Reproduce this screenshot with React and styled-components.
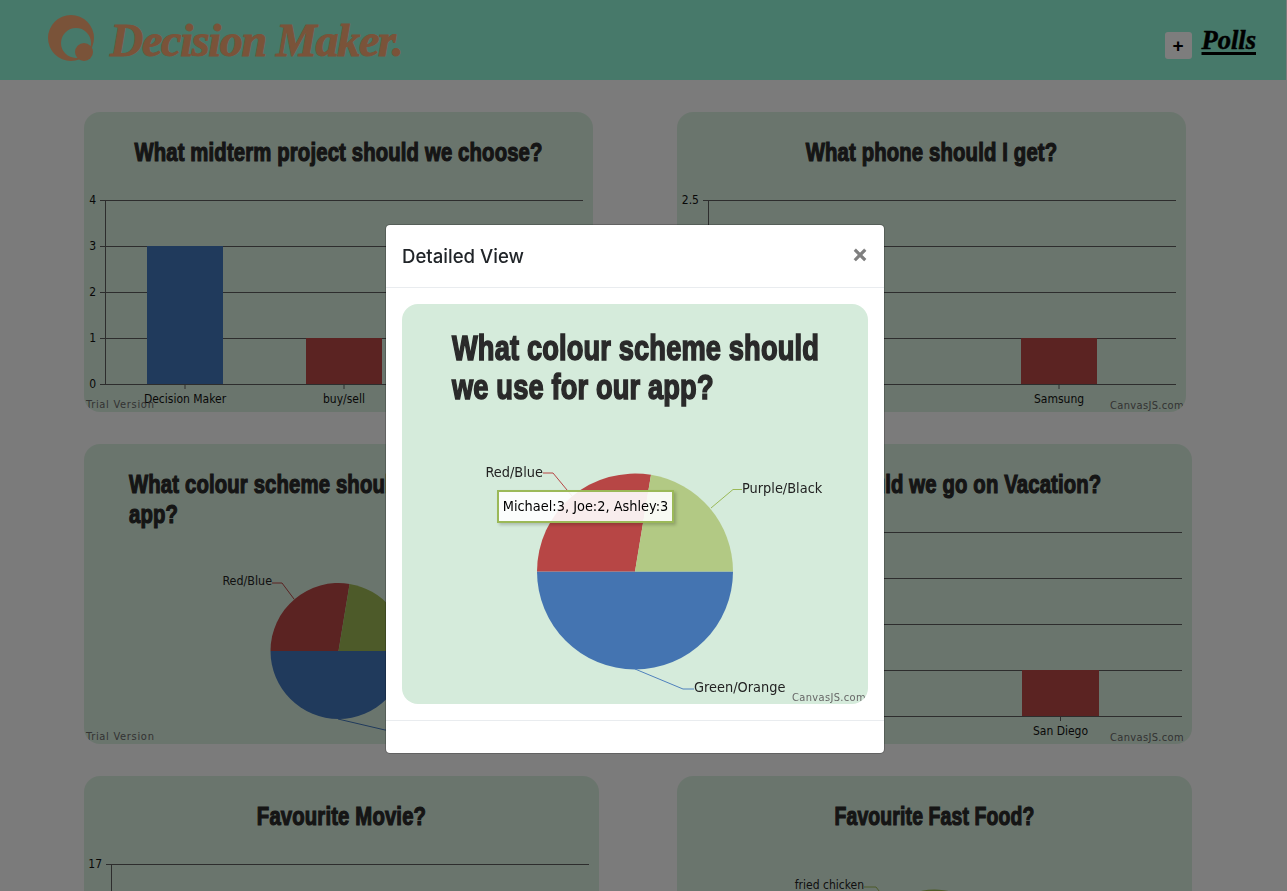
import styled, { createGlobalStyle } from "styled-components";

const GlobalStyle = createGlobalStyle`
  html, body {
    margin: 0;
    height: 100%;
    overflow: hidden;
    background: #f6f6f6;
  }
`;

const CHART_FONT = `"DejaVu Sans Condensed", "DejaVu Sans", sans-serif`;

// HEADER
const Header = styled.header`
  height: 80px;
  margin-right: 1px;
  padding: 15px 30px 0 48px;
  box-sizing: border-box;
  display: flex;
  align-items: flex-start;
  justify-content: space-between;
  background: #8ef2d4;
`;
const Brand = styled.div`
  display: flex;
  gap: 16px;
  color: #f4a672;
`;
const BrandName = styled.span`
  font-family: "Liberation Serif", serif;
  font-style: italic;
  font-weight: 700;
  font-size: 46px;
  line-height: 52px;
  letter-spacing: -1.3px;
  -webkit-text-stroke: 1px #f4a672;
`;
const Nav = styled.nav`
  display: flex;
  align-items: flex-start;
  gap: 10px;
`;
const AddButton = styled.button`
  width: 27px;
  height: 27px;
  margin-top: 17px;
  padding: 0;
  border: none;
  border-radius: 3px;
  background: #fbfbfb;
  color: #000;
  font-family: "Liberation Sans", sans-serif;
  font-weight: 700;
  font-size: 19px;
  line-height: 27px;
`;
const PollsLink = styled.a`
  font-family: "Liberation Serif", serif;
  font-style: italic;
  font-weight: 700;
  font-size: 26.5px;
  line-height: 50px;
  color: #000;
  text-decoration: underline;
  text-decoration-thickness: 3px;
  text-underline-offset: 3px;
  -webkit-text-stroke: 0.5px #000;
`;

// DASHBOARD
const Board = styled.main`
  display: grid;
  grid-template-columns: 593px 1fr;
  row-gap: 32px;
  padding: 32px 0 0 84px;
`;
const Card = styled.section`
  position: relative;
  width: ${(p) => p.$width}px;
  height: ${(p) => p.$height || 300}px;
  border-radius: 16px;
  background: #d5ebdb;
  overflow: hidden;
`;
// no Impact here, so squeeze a bold sans and thicken it with a stroke
const Title = styled.h2`
  --squeeze: ${(p) => p.$squeeze || 0.78};
  width: calc(100% / var(--squeeze));
  height: ${(p) => p.$height || 80}px;
  margin: 0;
  padding: ${(p) => p.$top || 25}px 0 0 calc(${(p) => p.$side || 0}px / var(--squeeze));
  box-sizing: border-box;
  transform: scaleX(var(--squeeze));
  transform-origin: left top;
  font-family: "Liberation Sans", sans-serif;
  font-weight: 700;
  font-size: ${(p) => p.$size || 26}px;
  line-height: ${(p) => p.$lead || 30}px;
  letter-spacing: 0.2px;
  white-space: nowrap;
  text-align: ${(p) => (p.$side ? "left" : "center")};
  color: #2a2a2a;
  -webkit-text-stroke: ${(p) => p.$stroke || 1.2}px #2a2a2a;
`;
const Plot = styled.svg`
  display: block;
  overflow: visible;
  font-family: ${CHART_FONT};
`;
const Watermark = styled.span`
  position: absolute;
  bottom: ${(p) => (p.$right === undefined ? 1 : 0)}px;
  ${(p) => (p.$right === undefined ? "left: 2px;" : `right: ${p.$right}px;`)}
  font-family: ${CHART_FONT};
  font-size: 11px;
  line-height: 12px;
  letter-spacing: ${(p) => (p.$right === undefined ? 0.7 : 0.35)}px;
  color: #666;
`;

// MODAL
const Overlay = styled.div`
  position: fixed;
  inset: 0;
  padding-right: 17px;
  display: flex;
  justify-content: center;
  align-items: flex-start;
  background: rgba(0, 0, 0, 0.5);
`;
const Modal = styled.div`
  width: 500px;
  margin-top: 224px;
  box-sizing: border-box;
  border: 1px solid rgba(0, 0, 0, 0.2);
  border-radius: 5px;
  background: #fff;
  background-clip: padding-box;
`;
const ModalHeader = styled.div`
  height: 63px;
  padding: 0 17px 0 16px;
  box-sizing: border-box;
  display: flex;
  align-items: center;
  justify-content: space-between;
  border-bottom: 1px solid #e9ecef;
`;
const ModalTitle = styled.h5`
  margin: 0;
  font-family: Inter, "Liberation Sans", sans-serif;
  font-weight: 500;
  font-size: 18.6px;
  color: #212529;
`;
const CloseButton = styled.button`
  padding: 0 0 2px;
  border: none;
  background: none;
  font-family: "Liberation Sans", sans-serif;
  font-weight: 700;
  font-size: 24px;
  line-height: 24px;
  color: #7f7f7f;
  -webkit-text-stroke: 0.5px #7f7f7f;
`;
const ModalBody = styled.div`
  padding: 16px;
`;
const ModalFooter = styled.div`
  height: 32px;
  border-top: 1px solid #e9ecef;
`;
const Tooltip = styled.div`
  position: absolute;
  left: 95px;
  top: 186px;
  width: 177px;
  height: 33px;
  box-sizing: border-box;
  border: 2px solid #9bb958;
  background: rgba(255, 255, 255, 0.9);
  box-shadow: 2px 2px 3px rgba(0, 0, 0, 0.2);
  font-family: ${CHART_FONT};
  font-size: 14.4px;
  line-height: 29px;
  text-align: center;
  color: #000;
`;

const Logo = () => (
  <svg width="46" height="46" viewBox="0 0 46 46" fill="currentColor">
    <path
      fillRule="evenodd"
      d="M23 0a23 23 0 1 0 0 46a23 23 0 1 0 0-46ZM28 13a15 15 0 1 0 0 30a15 15 0 1 0 0-30Z"
    />
    <circle cx="36" cy="37" r="9" />
  </svg>
);

const ROW = 46;
const BarChart = ({ width, left, right, ticks, bars }) => {
  const rowY = (i) => 8 + i * ROW;
  const bottom = rowY(ticks.length - 1);
  return (
    <Plot width={width} height="220">
      {ticks.map((t, i) => (
        <g key={i}>
          <line x1={left - 5} x2={right} y1={rowY(i) + 0.5} y2={rowY(i) + 0.5} stroke="#5a5a5a" />
          <text x={left - 9} y={rowY(i) + 4} fontSize="12" textAnchor="end" fill="#111">
            {t}
          </text>
        </g>
      ))}
      <line x1={left + 0.5} x2={left + 0.5} y1={rowY(0)} y2={bottom} stroke="#5a5a5a" />
      {bars.map((b) => (
        <g key={b.label}>
          <rect x={b.x} y={rowY(b.row)} width={b.w} height={bottom - rowY(b.row)} fill={b.color} />
          <line
            x1={b.x + b.w / 2}
            x2={b.x + b.w / 2}
            y1={bottom}
            y2={bottom + 5}
            stroke="#5a5a5a"
          />
          <text x={b.x + b.w / 2} y={bottom + 19} fontSize="12" textAnchor="middle" fill="#111">
            {b.label}
          </text>
        </g>
      ))}
    </Plot>
  );
};

const polar = (cx, cy, r, deg) => {
  const a = (deg * Math.PI) / 180;
  return [cx + r * Math.cos(a), cy + r * Math.sin(a)];
};

const PieChart = ({ width, height, cx, cy, r, slices, leaders, fontSize }) => (
  <Plot width={width} height={height}>
    {slices.map((s) => {
      const [x1, y1] = polar(cx, cy, r, s.from);
      const [x2, y2] = polar(cx, cy, r, s.to);
      const large = s.to - s.from > 180 ? 1 : 0;
      return (
        <path
          key={s.from}
          d={`M${cx} ${cy}L${x1} ${y1}A${r} ${r} 0 ${large} 1 ${x2} ${y2}Z`}
          fill={s.color}
        />
      );
    })}
    {leaders.map((l) => (
      <g key={l.text}>
        <polyline points={l.points} fill="none" stroke={l.color} />
        <text x={l.x} y={l.y} fontSize={fontSize} textAnchor={l.anchor} fill="#222">
          {l.text}
        </text>
      </g>
    ))}
  </Plot>
);

const DIM = { blue: "#4074b8", red: "#b64644", green: "#9ab553" };
const LIT = { blue: "#4474b1", red: "#b74645", green: "#b2c984" };
const TICKS = ["4", "3", "2", "1", "0"];

const App = () => (
  <>
    <GlobalStyle />
    <Header>
      <Brand>
        <Logo />
        <BrandName>Decision Maker.</BrandName>
      </Brand>
      <Nav>
        <AddButton>+</AddButton>
        <PollsLink>Polls</PollsLink>
      </Nav>
    </Header>
    <Board>
      <Card $width={509}>
        <Title>What midterm project should we choose?</Title>
        <BarChart
          width={509}
          left={21}
          right={499}
          ticks={TICKS}
          bars={[
            { x: 63, w: 76, row: 1, color: DIM.blue, label: "Decision Maker" },
            { x: 222, w: 76, row: 3, color: DIM.red, label: "buy/sell" },
          ]}
        />
        <Watermark>Trial Version</Watermark>
      </Card>
      <Card $width={509}>
        <Title>What phone should I get?</Title>
        <BarChart
          width={509}
          left={31}
          right={499}
          ticks={["2.5", "1.9", "1.3", "0.6", "0"]}
          bars={[{ x: 344, w: 76, row: 3, color: DIM.red, label: "Samsung" }]}
        />
        <Watermark $right={2}>CanvasJS.com</Watermark>
      </Card>
      <Card $width={515}>
        <Title $side={45}>
          What colour scheme should we use for our
          <br />
          app?
        </Title>
        <PieChart
          width={515}
          height={220}
          cx={254.5}
          cy={127}
          r={68}
          fontSize={12.4}
          slices={[
            { from: 0, to: 180, color: DIM.blue },
            { from: 180, to: 279.4, color: DIM.red },
            { from: 279.4, to: 360, color: DIM.green },
          ]}
          leaders={[
            { text: "Red/Blue", x: 188, y: 61, anchor: "end", color: DIM.red, points: "188,59 198,59 210,75" },
            { text: "Green/Orange", x: 312, y: 210, anchor: "start", color: DIM.blue, points: "254,195 301,206 312,206" },
          ]}
        />
        <Watermark>Trial Version</Watermark>
      </Card>
      <Card $width={515}>
        <Title>Where should we go on Vacation?</Title>
        <BarChart
          width={515}
          left={31}
          right={505}
          ticks={TICKS}
          bars={[{ x: 345, w: 77, row: 3, color: DIM.red, label: "San Diego" }]}
        />
        <Watermark $right={8}>CanvasJS.com</Watermark>
      </Card>
      <Card $width={515}>
        <Title>Favourite Movie?</Title>
        <BarChart
          width={515}
          left={27}
          right={505}
          ticks={["17", "13", "9", "4", "0"]}
          bars={[]}
        />
      </Card>
      <Card $width={515}>
        <Title $squeeze={0.745}>Favourite Fast Food?</Title>
        <PieChart
          width={515}
          height={220}
          cx={257.5}
          cy={101.5}
          r={68}
          fontSize={12}
          slices={[
            { from: 0, to: 180, color: DIM.blue },
            { from: 180, to: 245, color: DIM.red },
            { from: 245, to: 360, color: DIM.green },
          ]}
          leaders={[
            { text: "fried chicken", x: 187, y: 33, anchor: "end", color: DIM.green, points: "187,31 199,31 206,40" },
          ]}
        />
      </Card>
    </Board>
    <Overlay>
      <Modal>
        <ModalHeader>
          <ModalTitle>Detailed View</ModalTitle>
          <CloseButton>×</CloseButton>
        </ModalHeader>
        <ModalBody>
          <Card $width={466} $height={400}>
            <Title $height={130} $top={24} $side={50} $size={35} $lead={39} $stroke={1.6} $squeeze={0.778}>
              What colour scheme should
              <br />
              we use for our app?
            </Title>
            <PieChart
              width={466}
              height={270}
              cx={233}
              cy={137.5}
              r={98}
              fontSize={14.4}
              slices={[
                { from: 0, to: 180, color: LIT.blue },
                { from: 180, to: 279.4, color: LIT.red },
                { from: 279.4, to: 360, color: LIT.green },
              ]}
              leaders={[
                { text: "Red/Blue", x: 141, y: 43, anchor: "end", color: LIT.red, points: "141,39 151,39 170,62" },
                { text: "Purple/Black", x: 340, y: 59, anchor: "start", color: "#9bb958", points: "340,55.5 331,55.5 309,74" },
                { text: "Green/Orange", x: 292, y: 258, anchor: "start", color: "#4f81bd", points: "233,235 281,255 292,255" },
              ]}
            />
            <Tooltip>Michael:3, Joe:2, Ashley:3</Tooltip>
            <Watermark $right={2}>CanvasJS.com</Watermark>
          </Card>
        </ModalBody>
        <ModalFooter />
      </Modal>
    </Overlay>
  </>
);

export default App;
